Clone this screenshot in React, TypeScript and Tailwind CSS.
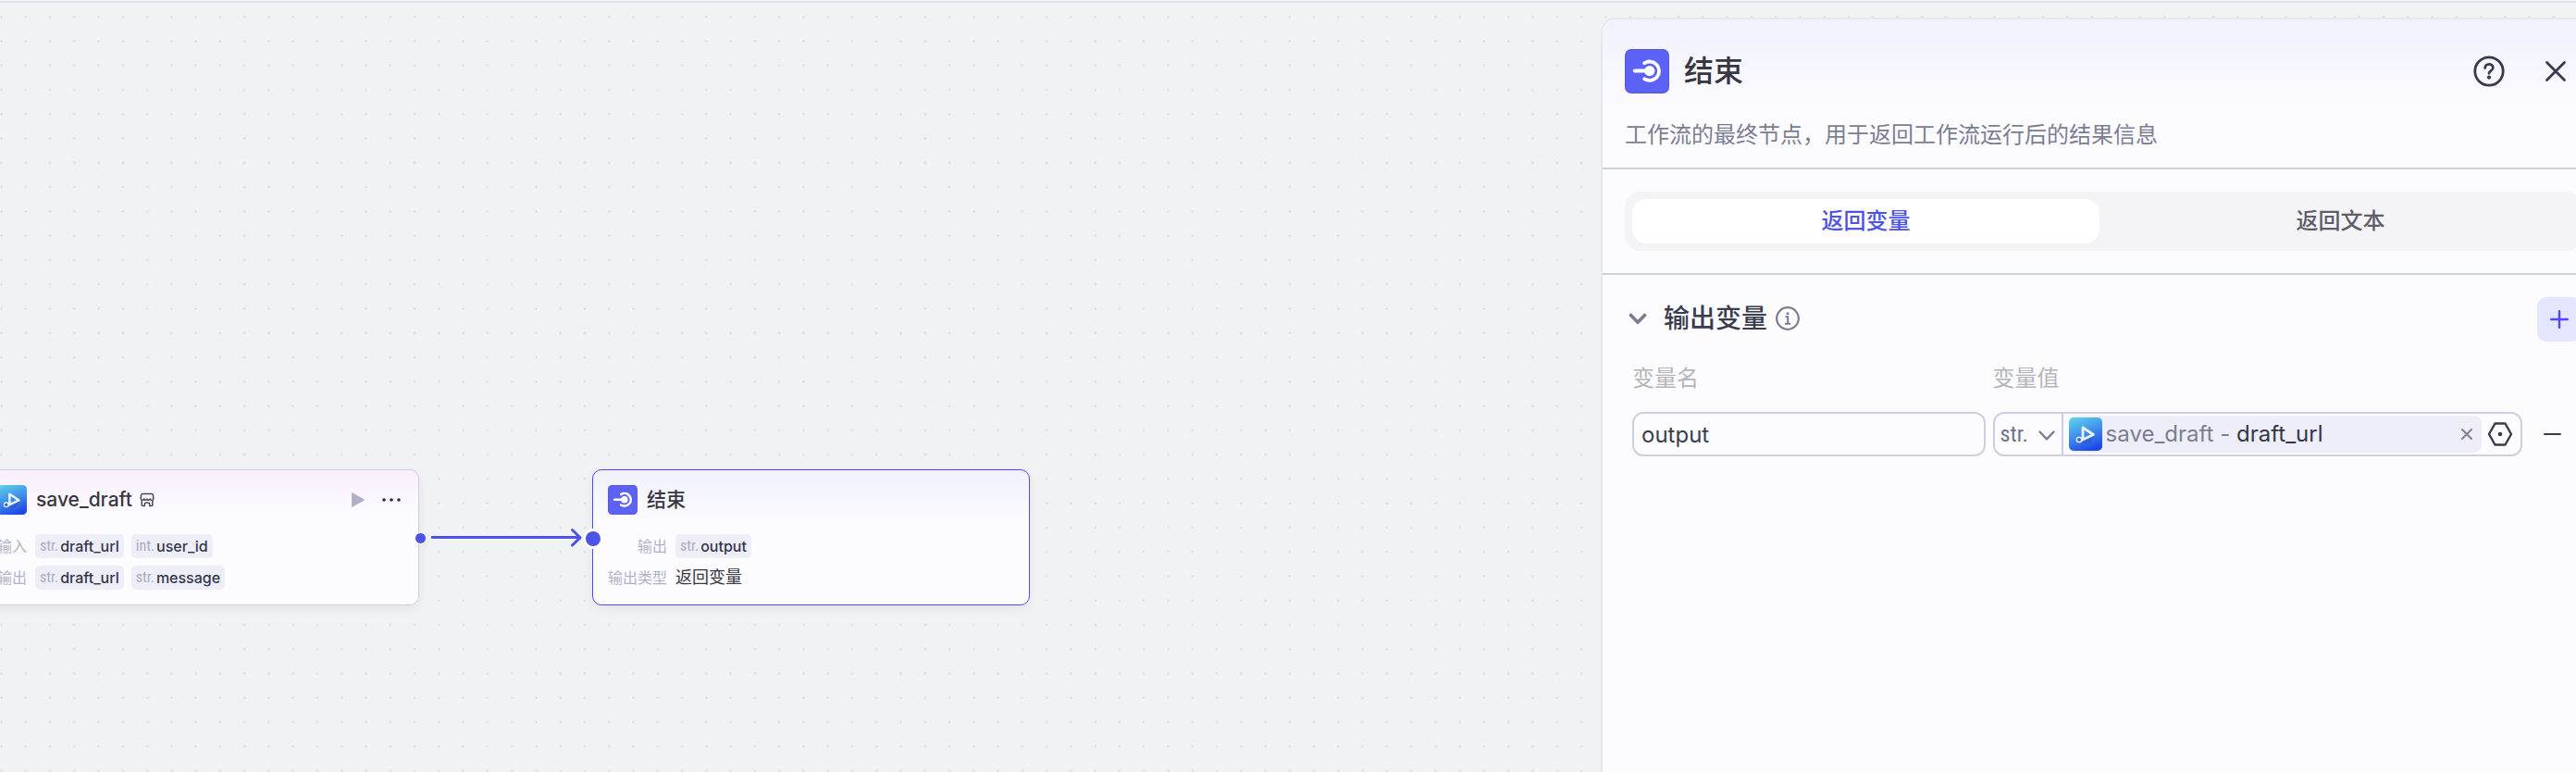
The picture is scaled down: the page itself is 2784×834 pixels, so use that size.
import type { ReactNode } from "react";

const FONT = "font-[Inter,'Noto_Sans_CJK_SC',sans-serif]";

export default function App() {
  return (
    <div className={`relative flex h-screen flex-col overflow-hidden bg-[#f1f2f4] text-[#383743] ${FONT}`}>
      <CanvasGrid />
      <div className="relative h-[3px] shrink-0 border-b-2 border-[#e2e4ee] bg-[#f7f7fb]" />

      <div className="relative flex min-h-0 flex-1">
        <main className="relative min-w-0 flex-1">
          <SaveDraftNode />
          <EndNode />
          <Edge />
        </main>
        <NodePanel />
      </div>
    </div>
  );
}

function CanvasGrid() {
  return (
    <svg className="absolute inset-0 h-full w-full" aria-hidden="true">
      <defs>
        <pattern id="grid-dots" width="26.27" height="26.27" x="0" y="16.7" patternUnits="userSpaceOnUse">
          <circle cx="1.5" cy="1.5" r="1.1" fill="#d4d5d8" />
        </pattern>
      </defs>
      <rect width="100%" height="100%" fill="url(#grid-dots)" />
    </svg>
  );
}

/* Nodes */

function SaveDraftNode() {
  return (
    <article className="absolute top-[504px] -left-5 w-[473px] rounded-[10px] border border-[#cdd0e0] bg-[#fcfcff] bg-linear-to-b from-[#f9effe] to-[#fcfcff] to-[52px] px-4 pt-4 pb-4 shadow-[0_4px_12px_rgba(0,0,0,0.06)]">
      <header className="flex h-8 items-center">
        <PluginIcon className="size-8" />
        <h2 className="ml-[10px] text-[21px] leading-8 font-medium">save_draft</h2>
        <StoreIcon className="ml-2 size-4" />
        <button type="button" aria-label="运行" className="ml-auto">
          <svg viewBox="0 0 14 16" className="h-4 w-3.5" aria-hidden="true">
            <path d="M0 1.200c0-.8.6-1.100 1.300-.7l12 6.700c.7.400.7 1.200 0 1.600l-12 6.700C.6 15.900 0 15.600 0 14.800z" fill="#b0b1c5" />
          </svg>
        </button>
        <button type="button" aria-label="更多" className="mr-[2px] ml-[18px]">
          <svg viewBox="0 0 22 6" className="h-1.5 w-[22px]" fill="#2a2d3d" aria-hidden="true">
            <circle cx="3" cy="3" r="1.800" />
            <circle cx="11" cy="3" r="1.800" />
            <circle cx="19" cy="3" r="1.800" />
          </svg>
        </button>
      </header>
      <div className="mt-[21px] space-y-2">
        <NodeRow label="输入" labelClass="w-8">
          <VarTag type="str." name="draft_url" />
          <VarTag type="int." name="user_id" />
        </NodeRow>
        <NodeRow label="输出" labelClass="w-8">
          <VarTag type="str." name="draft_url" />
          <VarTag type="str." name="message" />
        </NodeRow>
      </div>
    </article>
  );
}

function EndNode() {
  return (
    <article className="absolute top-[504px] left-[640px] w-[473px] rounded-[10px] border border-[#5147ff] bg-[#fcfcff] bg-linear-to-b from-[#f1f1fe] to-[#fcfcff] to-[58px] px-4 pt-4 pb-4 shadow-[0_4px_12px_rgba(0,0,0,0.06)]">
      <header className="flex h-8 items-center gap-[10px]">
        <EndIcon className="size-8" />
        <h2 className="text-[21px] leading-8 font-medium">结束</h2>
      </header>
      <div className="mt-[21px] space-y-2">
        <NodeRow label="输出" labelClass="w-16">
          <VarTag type="str." name="output" />
        </NodeRow>
        <NodeRow label="输出类型" labelClass="w-16">
          <span className="text-lg leading-[26px]">返回变量</span>
        </NodeRow>
      </div>
    </article>
  );
}

function NodeRow({ label, labelClass, children }: { label: string; labelClass: string; children: ReactNode }) {
  return (
    <div className="flex h-[26px] items-center">
      <span className={`mr-[9px] shrink-0 text-right text-base whitespace-nowrap text-[#b0b3c8] ${labelClass}`}>{label}</span>
      <div className="flex gap-2">{children}</div>
    </div>
  );
}

function VarTag({ type, name }: { type: string; name: string }) {
  return (
    <span className="flex h-[26px] items-center gap-[2px] rounded-[5px] bg-[#eeeef8] px-[5px] text-base">
      <span className="font-['Liberation_Sans_Narrow','Roboto_Condensed',Roboto,sans-serif] text-[#a9acc1]">{type}</span>
      <span className="font-medium text-[#32364a]">{name}</span>
    </span>
  );
}

function Edge() {
  return (
    <svg viewBox="0 0 210 30" className="absolute top-[564px] left-[446px] h-[30px] w-[210px]" fill="none" aria-hidden="true">
      <path d="M20 13.500H181" stroke="#4d53e8" strokeWidth="3" />
      <path d="M172.500 5.500L181 13.800L172.500 22" stroke="#4d53e8" strokeWidth="3" strokeLinecap="round" strokeLinejoin="round" />
      <circle cx="8.500" cy="14.500" r="6" fill="#4d53e8" stroke="#fff" />
      <circle cx="195" cy="15" r="11" fill="#fff" />
      <circle cx="195" cy="15" r="8" fill="#4d53e8" />
    </svg>
  );
}

/* Side panel */

function NodePanel() {
  return (
    <aside className="mt-4 -mr-8 w-[1086px] shrink-0 rounded-t-2xl border-2 border-b-0 border-[#e5e7ef] bg-[#fcfcff]">
      <header className="rounded-t-2xl border-b-2 border-[#cdd0e0] bg-linear-to-b from-[#f1f1fd] to-[#fcfcff] to-[100px] px-6 pt-8 pb-[19px]">
        <div className="flex h-12 items-center">
          <EndIcon className="size-12" />
          <h1 className="ml-4 text-[32px] leading-12 font-medium">结束</h1>
          <button type="button" aria-label="帮助" className="ml-auto flex size-12 items-center justify-center">
            <svg viewBox="0 0 34 34" className="size-[34px]" fill="none" stroke="#383a4d" strokeWidth="2.800" strokeLinecap="round" aria-hidden="true">
              <circle cx="17" cy="17" r="15.200" />
              <path d="M12.700 13.500c0-2.600 1.900-4.200 4.300-4.200s4.300 1.500 4.300 3.900c0 3.200-4.200 3-4.300 6.100" />
              <circle cx="17" cy="23.600" r="2.100" fill="#383a4d" stroke="none" />
            </svg>
          </button>
          <button type="button" aria-label="关闭" className="mr-1 ml-6 flex size-12 items-center justify-center">
            <svg viewBox="0 0 24 24" className="size-6" fill="none" stroke="#383a4d" strokeWidth="2.800" strokeLinecap="round" aria-hidden="true">
              <path d="M2.500 2.500l19 19M21.500 2.500l-19 19" />
            </svg>
          </button>
        </div>
        <p className="mt-[29px] text-2xl text-[#7b7e92]">工作流的最终节点，用于返回工作流运行后的结果信息</p>
      </header>

      <div className="border-b-2 border-[#cdd0e0] px-6 py-6">
        <div role="tablist" className="grid grid-cols-2 gap-2 rounded-2xl bg-[#f4f4f7] p-2">
          <button type="button" role="tab" aria-selected="true" className="h-12 rounded-2xl bg-white text-2xl font-medium text-[#4d53e8]">
            返回变量
          </button>
          <button type="button" role="tab" aria-selected="false" className="h-12 rounded-2xl text-2xl font-medium text-[#5f5e68]">
            返回文本
          </button>
        </div>
      </div>

      <section className="px-6 pt-6">
        <div className="flex items-start justify-between">
          <div className="flex h-[46px] items-center">
            <button type="button" aria-label="收起" className="ml-1 flex w-5 justify-center">
              <ChevronIcon className="w-5" strokeWidth={3.6} />
            </button>
            <h2 className="ml-[18px] text-[28px] leading-11 font-medium text-[#3a3d50]">输出变量</h2>
            <svg viewBox="0 0 26 26" className="ml-[9px] size-[26px]" fill="none" stroke="#7b7e92" strokeWidth="2.200" aria-hidden="true">
              <circle cx="13" cy="13" r="11.800" />
              <path d="M10.500 11.300h2.700v7.300M10 18.800h6.200" strokeWidth="2" />
              <circle cx="13" cy="7.700" r="1.500" fill="#7b7e92" stroke="none" />
            </svg>
          </div>
          <button type="button" aria-label="添加" className="flex size-12 items-center justify-center rounded-[10px] bg-[#e4e5ff]">
            <svg viewBox="0 0 20 20" className="size-5" fill="none" stroke="#5147ff" strokeWidth="2.400" strokeLinecap="round" aria-hidden="true">
              <path d="M10 1.200v17.600M1.200 10h17.600" />
            </svg>
          </button>
        </div>

        <div className="mt-6 grid grid-cols-[2fr_3fr_48px] gap-x-2 gap-y-5 px-2">
          <label htmlFor="var-name" className="text-2xl text-[#b5b6ba]">变量名</label>
          <label htmlFor="var-type" className="col-span-2 text-2xl text-[#b5b6ba]">变量值</label>

          <input
            id="var-name"
            type="text"
            defaultValue="output"
            className="h-12 w-full min-w-0 rounded-xl border-2 border-[#cdd0e0] bg-transparent px-2 text-2xl text-[#3a3d50] outline-none"
          />
          <div className="flex h-12 min-w-0 items-center rounded-xl border-2 border-[#cdd0e0]">
            <div className="relative h-full w-[74px] border-r-2 border-[#cdd0e0]">
              <select
                id="var-type"
                className="h-full w-full appearance-none bg-transparent pl-1.5 font-['Liberation_Sans_Narrow','Roboto_Condensed',Roboto,sans-serif] text-2xl text-[#6f7389] outline-none"
              >
                <option>str.</option>
              </select>
              <ChevronIcon className="pointer-events-none absolute top-[17px] right-1.5 w-5" strokeWidth={2.4} />
            </div>
            <div className="ml-1.5 flex h-10 min-w-0 flex-1 items-center rounded-lg bg-[#eeeef8]">
              <PluginIcon className="size-9" />
              <span className="ml-1 text-2xl whitespace-pre text-[#7b7e92]">
                save_draft - <span className="text-[#32364a]">draft_url</span>
              </span>
              <button type="button" aria-label="清除" className="mr-[9px] ml-auto">
                <svg viewBox="0 0 14 14" className="size-3.5" fill="none" stroke="#85858f" strokeWidth="2.200" strokeLinecap="round" aria-hidden="true">
                  <path d="M2 2l10 10M12 2L2 12" />
                </svg>
              </button>
            </div>
            <button type="button" aria-label="引用变量" className="mr-2 ml-1.5">
              <svg viewBox="0 0 28 28" className="size-7" fill="none" stroke="#383a4d" strokeWidth="2.400" strokeLinejoin="round" aria-hidden="true">
                <path d="M8.500 2.500h11l6.500 11.500l-6.500 11.500h-11L2 14z" />
                <circle cx="14" cy="14" r="2.300" fill="#383a4d" stroke="none" />
              </svg>
            </button>
          </div>
          <button type="button" aria-label="删除" className="flex h-12 w-12 items-center justify-center">
            <span className="h-[2px] w-[19px] rounded-full bg-[#383a4d]" />
          </button>
        </div>
      </section>
    </aside>
  );
}

/* Icons */

function ChevronIcon({ className, strokeWidth }: { className: string; strokeWidth: number }) {
  return (
    <svg viewBox="0 0 20 13" className={className} fill="none" stroke="#7b7e92" strokeWidth={strokeWidth} strokeLinecap="round" strokeLinejoin="round" aria-hidden="true">
      <path d="M2.500 2.500l7.500 7.800l7.500-7.800" />
    </svg>
  );
}

function EndIcon({ className }: { className: string }) {
  return (
    <svg viewBox="0 0 24 24" className={`shrink-0 ${className}`} fill="none" aria-hidden="true">
      <rect width="24" height="24" rx="3.500" fill="#5758d8" />
      <rect x=".5" y=".5" width="23" height="23" rx="3" fill="#5c62f5" />
      <path d="M5.400 11.800h8" stroke="#fff" strokeWidth="2" strokeLinecap="round" />
      <circle cx="13.400" cy="11.800" r="2.800" fill="#fff" />
      <path d="M10.600 7.600a5.100 5.100 0 1 1 0 8.500" stroke="#fff" strokeWidth="1.900" strokeLinecap="round" />
    </svg>
  );
}

function PluginIcon({ className }: { className: string }) {
  return (
    <svg viewBox="0 0 36 36" className={`shrink-0 ${className}`} fill="none" aria-hidden="true">
      <defs>
        <linearGradient id="plugin-bg" x1="8" y1="0" x2="22" y2="36" gradientUnits="userSpaceOnUse">
          <stop offset="0" stopColor="#5cccec" />
          <stop offset=".5" stopColor="#3f8eea" />
          <stop offset="1" stopColor="#1f46e6" />
        </linearGradient>
      </defs>
      <rect width="36" height="36" rx="5" fill="url(#plugin-bg)" />
      <path d="M14 27.500l14-8l-6 8z" fill="#1d49c8" opacity=".4" />
      <path d="M15 22.500V11l11.500 7.500L12.500 25" stroke="#e6f3ff" strokeWidth="2.800" strokeLinejoin="round" />
      <circle cx="11" cy="24" r="2.700" fill="#2f6be6" stroke="#fff" strokeWidth="1.300" />
    </svg>
  );
}

function StoreIcon({ className }: { className: string }) {
  return (
    <svg viewBox="0 0 16 16" className={className} fill="none" stroke="#4a4a59" strokeWidth="1.500" strokeLinecap="round" strokeLinejoin="round" aria-hidden="true">
      <path d="M3.200 1.500h9.600q1.500 0 1.700 1.700l.3 3.600q-.2 1.500-1.600 1.500-1.500 0-1.900-1.400-.6 1.400-1.700 1.400T8 6.900q-.5 1.400-1.600 1.400T4.700 6.900q-.5 1.400-1.900 1.400-1.400 0-1.600-1.500l.3-3.600q.2-1.700 1.700-1.700z" />
      <path d="M2.200 9v4.600q0 .9.900.9h2.200v-2q0-1.500 2.700-1.500t2.700 1.500v2h2.200q.9 0 .9-.9V9" />
    </svg>
  );
}
